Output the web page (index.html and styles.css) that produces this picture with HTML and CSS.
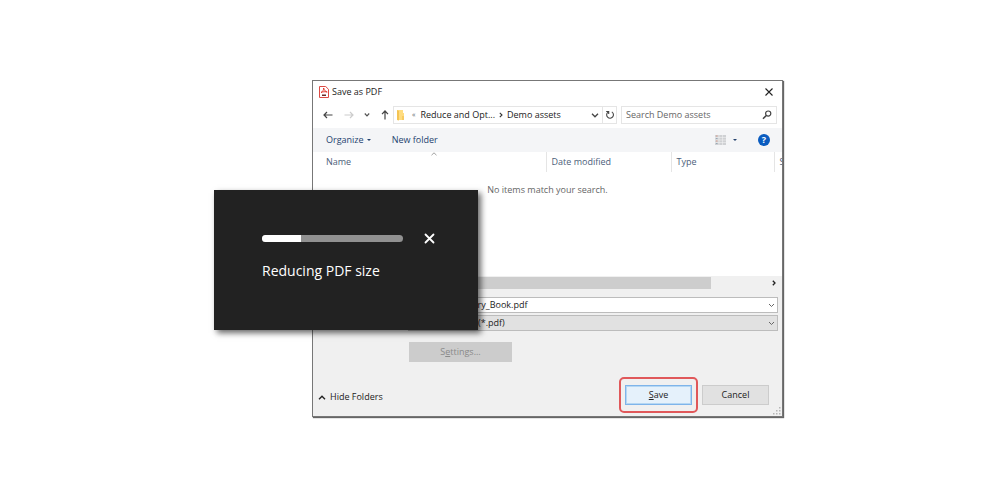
FILE: index.html
```html
<!DOCTYPE html>
<html lang="en">
<head>
    <meta charset="UTF-8">
    <meta name="viewport" content="width=device-width, initial-scale=1.0">
    <title>Save as PDF</title>
    <link rel="stylesheet" href="styles.css">
</head>
<body>
    <main class="scene">
        <form class="dialog">
            <header class="title-bar">
                <svg class="pdf-icon" viewBox="0 0 10 12">
                    <path d="M.5.5h6.2l2.8 2.8v8.2h-9z" fill="#fff" stroke="#dc4a43"/>
                    <path d="M2 6.500C3.800 5.600 4.800 3.800 4.600 2c1 2.700 1.800 3.600 3.600 4C6 5.500 4 5.700 2 6.500z" fill="none" stroke="#e02a20" stroke-width=".9"/>
                    <path d="M3 8.500h4v1.500H3z" fill="#6b2a28"/>
                </svg>
                <h1 class="title">Save as PDF</h1>
                <button class="icon-button" type="button" aria-label="Close">
                    <svg width="8" height="8" viewBox="0 0 8 8"><path d="M.5.5l7 7M7.500.500l-7 7" stroke="#222" stroke-width="1.100"/></svg>
                </button>
            </header>

            <nav class="nav-bar">
                <div class="nav-arrows">
                    <button class="icon-button" type="button" aria-label="Back">
                        <svg width="10" height="8" viewBox="0 0 10 8"><path d="M9.500 4H1M4 1L1 4l3 3" fill="none" stroke="#444" stroke-width="1.200"/></svg>
                    </button>
                    <button class="icon-button" type="button" aria-label="Forward" disabled>
                        <svg width="10" height="8" viewBox="0 0 10 8"><path d="M.5 4H9M6 1l3 3-3 3" fill="none" stroke="#ccc" stroke-width="1.200"/></svg>
                    </button>
                    <button class="icon-button" type="button" aria-label="Recent locations">
                        <svg width="6" height="4" viewBox="0 0 6 4"><path d="M.8.5L3 2.800 5.200.5" fill="none" stroke="#555" stroke-width="1.200"/></svg>
                    </button>
                    <button class="icon-button" type="button" aria-label="Up">
                        <svg width="8" height="10" viewBox="0 0 8 10"><path d="M4 9.500V1M1 4.200L4 1l3 3.200" fill="none" stroke="#444" stroke-width="1.200"/></svg>
                    </button>
                </div>
                <div class="address">
                    <svg width="8" height="11" viewBox="0 0 8 11"><path d="M0 0h6v3h1v7H0z" fill="#ffdc80"/><path d="M0 0l2 1v9.500L0 10z" fill="#f4c453"/><path d="M5 6h2v4H5z" fill="#f7cb62"/></svg>
                    <span class="dots">«</span>
                    <a href="#">Reduce and Opt...</a>
                    <svg class="crumb-arrow" width="4" height="6" viewBox="0 0 4 6"><path d="M.8.8L3 3 .8 5.200" fill="none" stroke="#333" stroke-width="1.100"/></svg>
                    <a href="#">Demo assets</a>
                    <button class="icon-button history" type="button" aria-label="Previous locations">
                        <svg width="8" height="5" viewBox="0 0 8 5"><path d="M1 .8l3 3 3-3" fill="none" stroke="#444" stroke-width="1.300"/></svg>
                    </button>
                    <button class="icon-button refresh" type="button" aria-label="Refresh">
                        <svg width="10" height="10" viewBox="0 0 10 10"><path d="M6.800 1.900A3.400 3.400 0 1 1 3 2.100M1.200 1.500h2.500V4" fill="none" stroke="#444" stroke-width="1.100"/></svg>
                    </button>
                </div>
                <div class="search">
                    <input type="search" placeholder="Search Demo assets" aria-label="Search Demo assets">
                    <svg width="10" height="10" viewBox="0 0 10 10"><circle cx="6.200" cy="3.600" r="2.600" fill="none" stroke="#444" stroke-width="1.200"/><path d="M4.300 5.500L1 8.800" stroke="#444" stroke-width="1.600"/></svg>
                </div>
            </nav>

            <div class="toolbar">
                <button class="tool" type="button">Organize <span class="caret"></span></button>
                <button class="tool" type="button">New folder</button>
                <button class="tool view" type="button" aria-label="Change view">
                    <svg width="11" height="10" viewBox="0 0 11 10">
                        <path d="M0 0h11v10H0z" fill="#cfd1d4"/>
                        <path d="M0 2.500h11M0 5h11M0 7.500h11M4 0v10M7.500 0v10" stroke="#f4f5f7" stroke-width=".5"/>
                        <path d="M1 1h1.500M1 6h1.500" stroke="#d99a86"/><path d="M1 3.500h1.500M1 8.500h1.500" stroke="#97a7b5"/>
                    </svg>
                    <span class="caret"></span>
                </button>
                <button class="help" type="button" aria-label="Help">?</button>
            </div>

            <div class="file-list">
                <table>
                    <colgroup>
                        <col>
                        <col class="col-date">
                        <col class="col-type">
                        <col class="col-size">
                    </colgroup>
                    <thead>
                        <tr>
                            <th class="sorted">Name
                                <svg width="6" height="4" viewBox="0 0 6 4"><path d="M.5 3.200L3 .8l2.500 2.400" fill="none" stroke="#888" stroke-width=".8"/></svg>
                            </th>
                            <th>Date modified</th>
                            <th>Type</th>
                            <th>Size</th>
                        </tr>
                    </thead>
                    <tbody>
                        <tr><td colspan="4">No items match your search.</td></tr>
                    </tbody>
                </table>
            </div>
            <div class="scrollbar">
                <div class="thumb"></div>
                <svg width="4" height="6" viewBox="0 0 4 6"><path d="M.8.8L3 3 .8 5.200" fill="none" stroke="#222" stroke-width="1.300"/></svg>
            </div>

            <div class="fields">
                <div class="field">
                    <label for="file-name">File name:</label>
                    <div class="combo">
                        <input id="file-name" type="text" value="Story_Book.pdf">
                        <svg width="7" height="5" viewBox="0 0 7 5"><path d="M1 1l2.500 2.500L6 1" fill="none" stroke="#666"/></svg>
                    </div>
                </div>
                <div class="field">
                    <label for="file-type">Save as type:</label>
                    <div class="combo combo-type">
                        <select id="file-type"><option>Adobe PDF File (*.pdf)</option></select>
                        <svg width="7" height="5" viewBox="0 0 7 5"><path d="M1 1l2.500 2.500L6 1" fill="none" stroke="#666"/></svg>
                    </div>
                </div>
                <button class="button settings" type="button" disabled>S<u>e</u>ttings...</button>
            </div>

            <footer class="actions">
                <button class="hide-folders" type="button">
                    <svg width="8" height="5" viewBox="0 0 8 5"><path d="M1 4.200l3-3 3 3" fill="none" stroke="#222" stroke-width="1.400"/></svg>
                    Hide Folders
                </button>
                <div class="highlight">
                    <button class="button save" type="button"><u>S</u>ave</button>
                </div>
                <button class="button" type="button">Cancel</button>
            </footer>
            <svg class="grip" width="8" height="8" viewBox="0 0 8 8"><path d="M6 0h1.500v1.500H6zM3 3h1.500v1.500H3zM6 3h1.500v1.500H6zM0 6h1.500v1.500H0zM3 6h1.500v1.500H3zM6 6h1.500v1.500H6z" fill="#b5b5b5"/></svg>
        </form>

        <section class="progress-panel">
            <div class="progress-row">
                <div class="track" role="progressbar" aria-label="Reducing PDF size" aria-valuenow="28">
                    <div class="bar" style="width: 28%"></div>
                </div>
                <button class="icon-button" type="button" aria-label="Cancel reducing">
                    <svg width="11" height="11" viewBox="0 0 11 11"><path d="M1.500 1.500l8 8M9.500 1.500l-8 8" stroke="#fff" stroke-width="1.800" stroke-linecap="round"/></svg>
                </button>
            </div>
            <p class="progress-text">Reducing PDF size</p>
        </section>
    </main>
</body>
</html>
```
FILE: styles.css
```css
:root {
    --text: #222222;
    --heading: #4c607a;
    --link: #25436f;
    --line: #e5e5e5;
    --face: #f0f0f0;
}

* {
    box-sizing: border-box;
}

body {
    margin: 0;
    padding: 80px 0;
    background: #ffffff;
    color: var(--text);
    font-family: "Open Sans", "Noto Sans", sans-serif;
    font-size: 9px;
    line-height: 12px;
}

button,
input,
select {
    font: inherit;
    color: inherit;
}

svg {
    display: block;
    flex: none;
}

a {
    color: inherit;
    text-decoration: none;
    white-space: nowrap;
}

.scene {
    position: relative;
    max-width: 572px;
    margin: 0 auto;
    padding: 0 3px 0 98px;
}

.dialog {
    position: relative;
    background: var(--face);
    border: 1px solid #777777;
    box-shadow: 1px 1px 1px rgba(0, 0, 0, 0.6);
}

.icon-button {
    display: flex;
    align-items: center;
    justify-content: center;
    padding: 0;
    border: 0;
    background: none;
}

.title-bar {
    display: flex;
    align-items: center;
    gap: 3px;
    height: 21px;
    padding: 0 9px 0 6px;
    background: #ffffff;
}

.pdf-icon {
    width: 10px;
    height: 12px;
}

.title {
    flex: 1;
    margin: 0;
    font-size: 9px;
    font-weight: 400;
}

.nav-bar {
    display: flex;
    align-items: center;
    gap: 4px;
    height: 26px;
    padding: 0 5px 0 10px;
    background: #ffffff;
}

.nav-arrows {
    display: flex;
    flex: none;
    align-items: center;
    justify-content: space-between;
    width: 66px;
}

.address,
.search {
    display: flex;
    align-items: center;
    height: 18px;
    border: 1px solid var(--line);
}

.address {
    flex: 1;
    padding-left: 3px;
}

.dots {
    margin: 0 5px 0 7px;
    color: #666666;
    font-size: 7px;
}

.crumb-arrow {
    margin: 0 4px;
}

.history {
    margin: 0 3px 0 auto;
}

.refresh {
    width: 14px;
    height: 16px;
    border-left: 1px solid var(--line);
}

.search {
    width: 156px;
    padding: 0 4px;
}

.search input {
    flex: 1;
    min-width: 0;
    padding: 0;
    border: 0;
    outline: 0;
    appearance: none;
}

.search input::placeholder {
    color: #666666;
}

.toolbar {
    display: flex;
    align-items: center;
    gap: 21px;
    height: 24px;
    padding: 0 12px 0 13px;
    background: #f4f5f7;
    color: var(--link);
}

.tool {
    display: flex;
    align-items: center;
    gap: 3px;
    padding: 0;
    border: 0;
    background: none;
}

.view {
    gap: 7px;
    margin-left: auto;
}

.caret {
    border: 2px solid transparent;
    border-top-color: currentColor;
    border-bottom: 0;
}

.help {
    width: 12px;
    height: 12px;
    padding: 0;
    border: 0;
    border-radius: 50%;
    background: #0a5cc0;
    color: #ffffff;
    font-weight: 700;
    line-height: 12px;
}

.file-list {
    height: 124px;
    overflow: hidden;
    background: #ffffff;
}

table {
    width: 100%;
    table-layout: fixed;
    border-collapse: collapse;
}

.col-date {
    width: 125px;
}

.col-type {
    width: 103px;
}

.col-size {
    width: 8px;
}

th {
    height: 20px;
    padding: 0 5px;
    overflow: hidden;
    border-left: 1px solid var(--line);
    color: var(--heading);
    font-weight: 400;
    text-align: left;
    white-space: nowrap;
}

.sorted {
    position: relative;
    padding-left: 13px;
    border-left: 0;
}

.sorted svg {
    position: absolute;
    top: 0;
    left: 118px;
}

td {
    padding: 12px 0;
    color: #666666;
    text-align: center;
}

.scrollbar {
    display: flex;
    align-items: center;
    justify-content: space-between;
    height: 13px;
    padding-right: 6px;
}

.thumb {
    width: 86%;
    height: 12px;
    background: #cdcdcd;
}

.fields {
    display: flex;
    flex-direction: column;
    gap: 2px;
    padding: 8px 4px 0 13px;
}

.field {
    display: flex;
    align-items: center;
}

.field label {
    width: 82px;
}

.combo {
    display: flex;
    flex: 1;
    align-items: center;
    height: 16px;
    padding: 0 2px 0 55px;
    border: 1px solid #bcbcbc;
    background: #ffffff;
}

.combo-type {
    padding-left: 4px;
    background: #e1e1e1;
}

.combo input,
.combo select {
    flex: 1;
    min-width: 0;
    padding: 0;
    border: 0;
    outline: 0;
    background: none;
    appearance: none;
}

.button {
    width: 67px;
    height: 20px;
    padding: 0;
    border: 1px solid #cccccc;
    background: #e1e1e1;
}

.settings {
    width: 103px;
    margin: 9px 0 0 83px;
    background: #cccccc;
    color: #8a8a8a;
}

.actions {
    display: flex;
    align-items: center;
    gap: 4px;
    padding: 15px 13px 3px 5px;
}

.hide-folders {
    display: flex;
    align-items: center;
    gap: 4px;
    margin: 4px auto 0 0;
    padding: 0;
    border: 0;
    background: none;
}

.highlight {
    padding: 6px 4px;
    border: 2px solid #e0585a;
    border-radius: 5px;
}

.save {
    display: block;
    border: 1px solid #7eb4ea;
    background: #e5f1fb;
    box-shadow: inset 0 0 0 1px #b5d7f3;
}

.grip {
    position: absolute;
    right: 1px;
    bottom: 1px;
}

/* Progress window lies over the lower left of the dialog */
.progress-panel {
    position: absolute;
    top: 110px;
    left: 0;
    width: 264px;
    padding: 43px 43px 49px 48px;
    background: #222222;
    box-shadow: 3px 3px 6px rgba(0, 0, 0, 0.6);
    color: #ffffff;
}

.progress-row {
    display: flex;
    align-items: center;
    justify-content: space-between;
}

.track {
    width: 141px;
    height: 7px;
    overflow: hidden;
    border-radius: 4px;
    background: #919191;
}

.bar {
    height: 100%;
    background: #ffffff;
}

.progress-text {
    margin: 17px 0 0;
    font-size: 14px;
    line-height: 20px;
}
```
